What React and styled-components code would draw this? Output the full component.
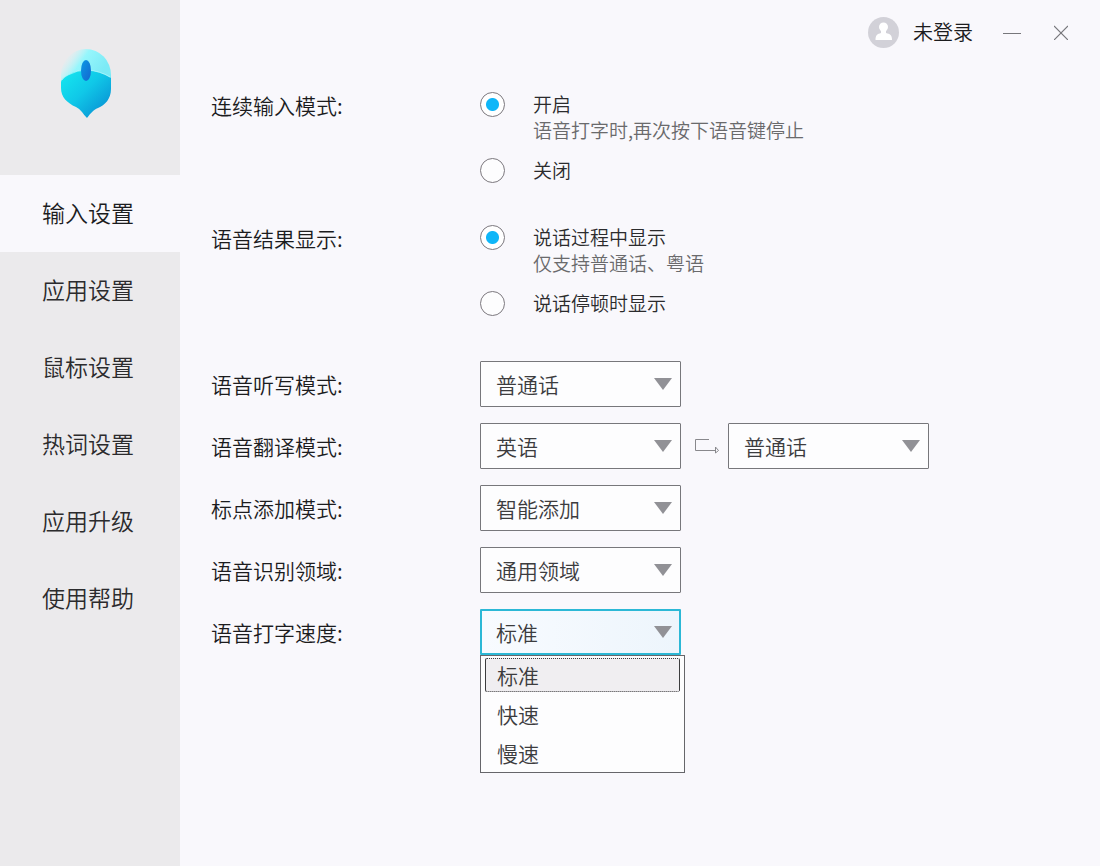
import React, { useState } from "react";
import styled, { createGlobalStyle, css } from "styled-components";

const GlobalStyle = createGlobalStyle`
  *, *::before, *::after { box-sizing: border-box; }
  body {
    margin: 0;
    background: #f9f8fc;
    color: #1c1c1e;
    font-family: "Noto Sans CJK SC", "Noto Sans", sans-serif;
    font-weight: 350;
  }
  button, select, input { font: inherit; color: inherit; }
`;

const Window = styled.div`
  display: flex;
  min-height: 100vh;
`;

const Sidebar = styled.aside`
  flex: none;
  width: 180px;
  background: #ebeaec;
`;

const Brand = styled.div`
  display: flex;
  justify-content: center;
  height: 175px;
  padding: 48px 8px 0 0;
`;

const NavList = styled.ul`
  margin: 0;
  padding: 0;
  list-style: none;
`;

const NavButton = styled.button`
  display: block;
  width: 100%;
  height: 77px;
  padding: 0 4px 4px 0;
  border: 0;
  background: ${(p) => (p.$active ? "#f9f8fc" : "transparent")};
  color: ${(p) => (p.$active ? "#1c1c1e" : "#2b2b2d")};
  font-size: 23px;
  line-height: 28px;
  cursor: pointer;
`;

const Main = styled.main`
  flex: 1;
  min-width: 0;
`;

const TitleBar = styled.header`
  display: flex;
  justify-content: flex-end;
  align-items: center;
  height: 64px;
  padding-right: 32px;
`;

const Account = styled.button`
  display: flex;
  align-items: center;
  gap: 14px;
  margin-right: 30px;
  padding: 0;
  border: 0;
  background: none;
  font-size: 20px;
  line-height: 28px;
  cursor: pointer;
`;

const WindowButton = styled.button`
  display: flex;
  padding: 0;
  border: 0;
  background: none;
  cursor: pointer;
  & + & { margin-left: 33px; }
`;

const Settings = styled.form`
  padding: 27px 31px 40px;
`;

const settingRow = css`
  display: grid;
  grid-template-columns: 269px 1fr;
`;

const RadioSection = styled.div`
  ${settingRow}
  margin-bottom: 41px;
`;

const SelectSection = styled.div`
  display: grid;
  gap: 16px;
  padding-top: 4px;
`;

const SelectRow = styled.div`
  ${settingRow}
  align-items: center;
`;

const RowLabel = styled.label`
  font-size: 21px;
  line-height: 28px;
  white-space: nowrap;
`;

const RadioList = styled.div`
  display: grid;
  gap: 14px;
`;

const RadioOption = styled.label`
  display: flex;
  align-items: flex-start;
  gap: 28px;
  color: #2b2b2d;
  font-size: 19px;
  line-height: 26px;
  cursor: pointer;
`;

const Radio = styled.input`
  flex: none;
  appearance: none;
  width: 25px;
  height: 25px;
  margin: 1px 0 0;
  border: 1px solid #7c787e;
  border-radius: 50%;
  background: #fdfdfe;
  &:checked {
    background: radial-gradient(circle, #0fb6f8 6px, #fff 7px);
  }
`;

const OptionText = styled.span`
  display: grid;
`;

const Hint = styled.span`
  color: #6a6a6c;
`;

const Controls = styled.div`
  display: flex;
  align-items: center;
  gap: 8px;
`;

const SelectBox = styled.div`
  position: relative;
  width: 201px;
`;

const Select = styled.select`
  display: block;
  appearance: none;
  width: 100%;
  height: 46px;
  padding: 0 32px 0 ${(p) => (p.$open ? "14px" : "15px")};
  border: ${(p) => (p.$open ? "2px solid #2cb8d6" : "1px solid #77777b")};
  border-radius: 1px;
  outline: 0;
  background: ${(p) => (p.$open ? "linear-gradient(90deg, #f8fbff, #edf5fc)" : "#fdfdfe")};
  color: #3c3c3e;
  font-size: 21px;
  line-height: 28px;
`;

const Caret = styled.svg`
  position: absolute;
  top: 17px;
  right: 9px;
  pointer-events: none;
`;

const Menu = styled.ul`
  position: absolute;
  top: 100%;
  left: 0;
  display: grid;
  gap: 5px;
  width: 205px;
  margin: 0;
  padding: 2px 4px;
  border: 1px solid #66666a;
  background: #fdfdfe;
  list-style: none;
`;

const MenuItem = styled.li`
  height: 34px;
  padding: 0 11px;
  border: 1px solid transparent;
  border-radius: 2px;
  color: #3c3c3e;
  font-size: 21px;
  line-height: 32px;
  cursor: pointer;
  ${(p) =>
    p.$current &&
    css`
      border-color: #3c3c3e;
      border-style: dotted solid;
      background: #f0eef1;
    `}
`;

function Logo() {
  return (
    <svg width="52" height="70" viewBox="0 0 52 70" role="img" aria-label="logo">
      <defs>
        <linearGradient id="shell" x1="0.1" y1="0.2" x2="0.8" y2="0.6">
          <stop offset="0" stopColor="#c8f6fa" stopOpacity="0" />
          <stop offset="0.4" stopColor="#96f6fc" />
          <stop offset="1" stopColor="#7ceaf6" />
        </linearGradient>
        <linearGradient id="body" x1="0.1" y1="0.1" x2="0.8" y2="0.8">
          <stop offset="0" stopColor="#14e2ee" />
          <stop offset="0.5" stopColor="#10c8e8" />
          <stop offset="1" stopColor="#0a9dd8" />
        </linearGradient>
        <linearGradient id="wheel" x1="0" y1="0" x2="1" y2="1">
          <stop offset="0" stopColor="#0a9ae6" />
          <stop offset="1" stopColor="#1566cf" />
        </linearGradient>
      </defs>
      <path d="M1 33V27a25 26 0 0 1 50 0v14L26 38Z" fill="url(#shell)" />
      <path d="M1 34Q2 30 8 27Q17 22 27 22Q40 23 51 30V41C51 51 45 57 38 60C33 62 31 65 27 70Q24 67 22 64Q20 61 16 59C7 55 1 49 1 40Z" fill="url(#body)" />
      <path d="M2 32Q4 29 8 27Q17 22 27 22Q40 23 50 29" fill="none" stroke="#c9fbfb" strokeOpacity="0.6" />
      <ellipse cx="26" cy="22.500" rx="5" ry="10.500" fill="url(#wheel)" />
    </svg>
  );
}

function Avatar() {
  return (
    <svg width="31" height="31" viewBox="0 0 31 31" aria-hidden="true">
      <circle cx="15.500" cy="15.500" r="15.500" fill="#d2d1d8" />
      <circle cx="15.500" cy="10" r="4.500" fill="#fff" />
      <path d="M13 12h5v4c4 1 6 2 6 7H7.500c0-5 2-6 5.500-7Z" fill="#fff" />
    </svg>
  );
}

function TurnArrow() {
  return (
    <svg width="31" height="16" viewBox="0 0 31 16" fill="none" stroke="#88888c" aria-hidden="true">
      <path d="M20 1.500H6.500V12.500H26" />
      <path d="M26.500 9V15L29.500 12.500Z" />
    </svg>
  );
}

const navItems = ["输入设置", "应用设置", "鼠标设置", "热词设置", "应用升级", "使用帮助"];

const radioGroups = [
  {
    name: "continuous",
    label: "连续输入模式:",
    options: [
      { text: "开启", hint: "语音打字时,再次按下语音键停止" },
      { text: "关闭" },
    ],
  },
  {
    name: "result",
    label: "语音结果显示:",
    options: [
      { text: "说话过程中显示", hint: "仅支持普通话、粤语" },
      { text: "说话停顿时显示" },
    ],
  },
];

const selectRows = [
  { id: "dictation", label: "语音听写模式:", value: "普通话" },
  { id: "translate", label: "语音翻译模式:", value: "英语", target: "普通话" },
  { id: "punctuation", label: "标点添加模式:", value: "智能添加" },
  { id: "domain", label: "语音识别领域:", value: "通用领域" },
];

const speeds = ["标准", "快速", "慢速"];

function SelectField({ options, open, children, ...rest }) {
  return (
    <SelectBox>
      <Select $open={open} {...rest}>
        {options.map((option) => (
          <option key={option}>{option}</option>
        ))}
      </Select>
      <Caret width="18" height="12" viewBox="0 0 18 12" aria-hidden="true">
        <path d="M0 0H18L9 12Z" fill="#919196" />
      </Caret>
      {children}
    </SelectBox>
  );
}

export default function App() {
  const [page, setPage] = useState(navItems[0]);
  const [speed, setSpeed] = useState(speeds[0]);
  const [open, setOpen] = useState(true);

  const pickSpeed = (value) => {
    setSpeed(value);
    setOpen(false);
  };

  return (
    <Window>
      <GlobalStyle />
      <Sidebar>
        <Brand>
          <Logo />
        </Brand>
        <nav>
          <NavList>
            {navItems.map((item) => (
              <li key={item}>
                <NavButton type="button" $active={item === page} onClick={() => setPage(item)}>
                  {item}
                </NavButton>
              </li>
            ))}
          </NavList>
        </nav>
      </Sidebar>
      <Main>
        <TitleBar>
          <Account type="button">
            <Avatar />
            未登录
          </Account>
          <WindowButton type="button" aria-label="最小化">
            <svg width="18" height="16" viewBox="0 0 18 16" stroke="#77777b">
              <path d="M0 9.500H18" />
            </svg>
          </WindowButton>
          <WindowButton type="button" aria-label="关闭窗口">
            <svg width="14" height="16" viewBox="0 0 14 16" stroke="#77777b" strokeWidth="1.200">
              <path d="M0 2L14 16M14 2L0 16" />
            </svg>
          </WindowButton>
        </TitleBar>
        <Settings>
          {radioGroups.map((group) => (
            <RadioSection key={group.name} role="radiogroup" aria-labelledby={group.name}>
              <RowLabel as="span" id={group.name}>
                {group.label}
              </RowLabel>
              <RadioList>
                {group.options.map((option, i) => (
                  <RadioOption key={option.text}>
                    <Radio type="radio" name={group.name} defaultChecked={i === 0} />
                    <OptionText>
                      {option.text}
                      {option.hint && <Hint>{option.hint}</Hint>}
                    </OptionText>
                  </RadioOption>
                ))}
              </RadioList>
            </RadioSection>
          ))}
          <SelectSection>
            {selectRows.map((row) => (
              <SelectRow key={row.id}>
                <RowLabel htmlFor={row.id}>{row.label}</RowLabel>
                <Controls>
                  <SelectField id={row.id} options={[row.value]} />
                  {row.target && (
                    <>
                      <TurnArrow />
                      <SelectField aria-label="翻译目标语言" options={[row.target]} />
                    </>
                  )}
                </Controls>
              </SelectRow>
            ))}
            <SelectRow>
              <RowLabel htmlFor="speed">语音打字速度:</RowLabel>
              <Controls>
                <SelectField
                  id="speed"
                  options={speeds}
                  open={open}
                  value={speed}
                  onChange={(e) => pickSpeed(e.target.value)}
                >
                  {open && (
                    <Menu role="listbox" aria-label="语音打字速度">
                      {speeds.map((item) => (
                        <MenuItem
                          key={item}
                          role="option"
                          aria-selected={item === speed}
                          $current={item === speed}
                          onClick={() => pickSpeed(item)}
                        >
                          {item}
                        </MenuItem>
                      ))}
                    </Menu>
                  )}
                </SelectField>
              </Controls>
            </SelectRow>
          </SelectSection>
        </Settings>
      </Main>
    </Window>
  );
}
